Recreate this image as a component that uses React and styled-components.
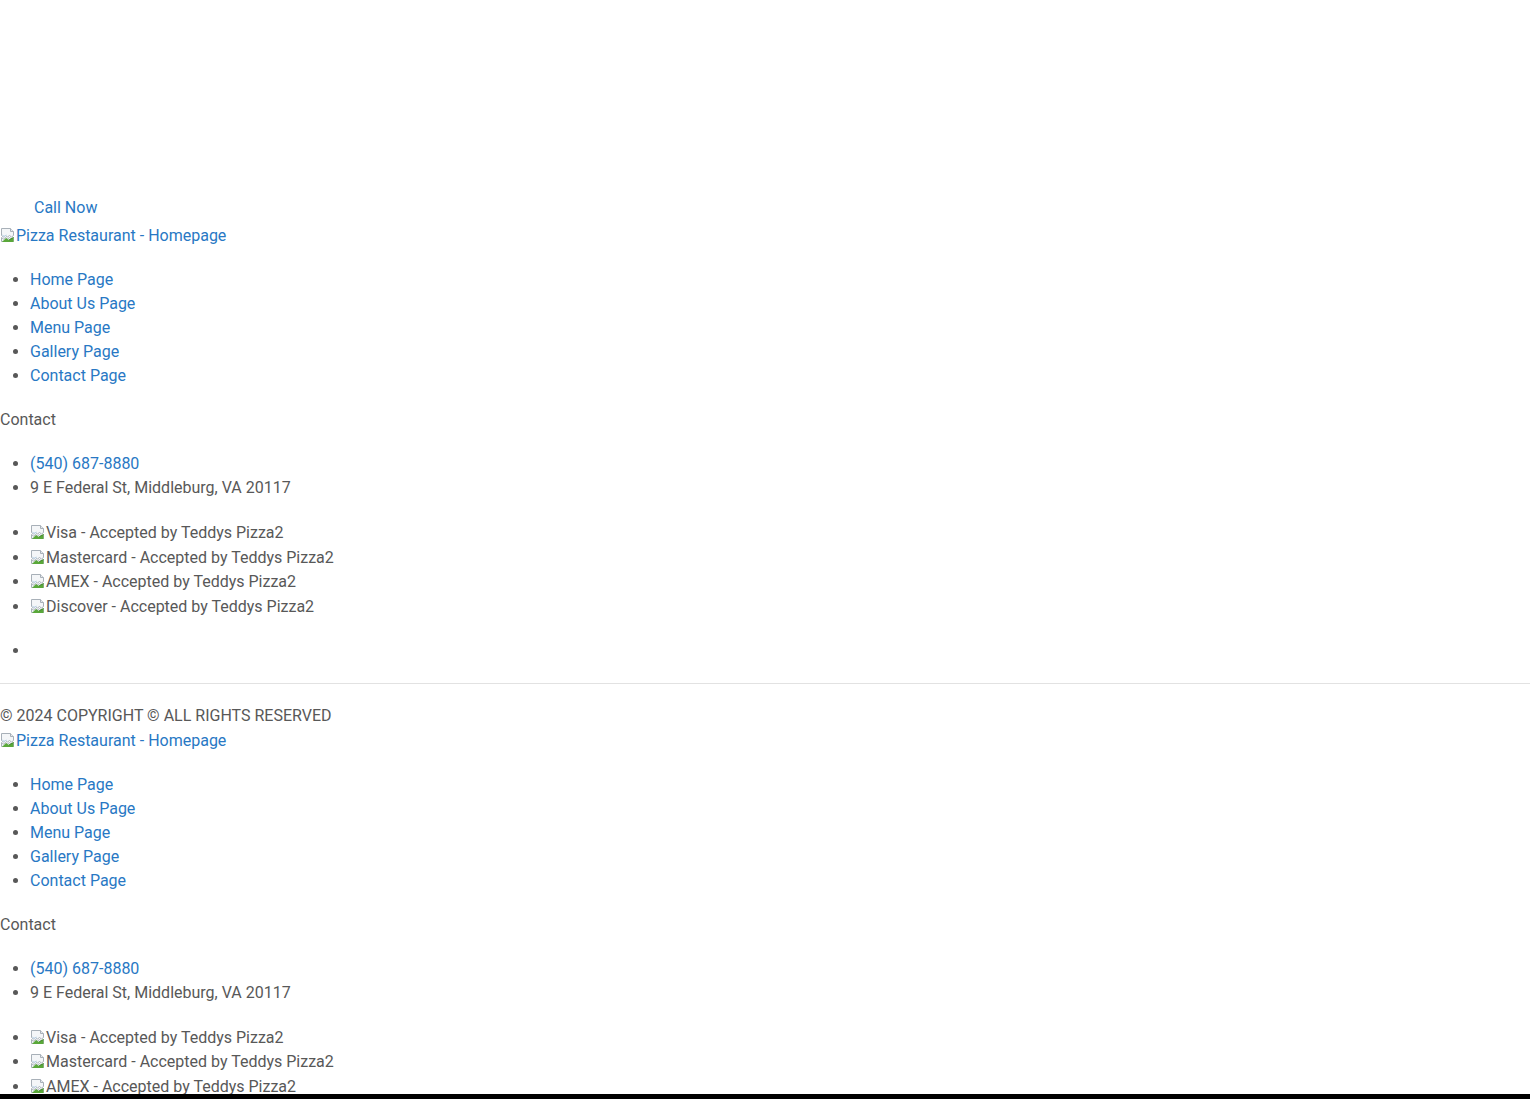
import React from "react";
import styled, { createGlobalStyle } from "styled-components";

const Global = createGlobalStyle`
  html, body { margin: 0; padding: 0; background: #fff; }
  body {
    font-family: Roboto, "Liberation Sans", Arial, sans-serif;
    font-size: 16px;
    line-height: 24px;
    color: #585858;
  }
  a { color: #2878c4; text-decoration: none; }
`;

const Page = styled.div`
  padding-top: 196px;
`;

const CallBar = styled.div`
  padding-left: 34px;
  height: 24px;
  margin-bottom: 4px;
`;

const LogoLink = styled.a`
  display: block;
  margin-top: 1px;
  height: 24px;
  white-space: nowrap;
`;

const List = styled.ul`
  margin: ${(p) => p.$margin || "20px 0"};
  padding-left: 30px;
  list-style: disc;
`;

const Item = styled.li`
  line-height: ${(p) => (p.$tall ? "24.67px" : "24px")};
  height: ${(p) => (p.$tall ? "24.67px" : "24px")};
`;

const Heading = styled.div`
  height: 24px;
`;

const Rule = styled.hr`
  margin: 20px 0 0;
  border: 0;
  border-top: 1px solid #e2e2e2;
  height: 0;
`;

const Copyright = styled.div`
  margin-top: 20px;
  height: 24px;
`;

const BottomBar = styled.div`
  position: fixed;
  left: 0;
  right: 0;
  bottom: 0;
  height: 5px;
  background: #000;
`;

const IconWrap = styled.svg`
  width: 16px;
  height: 16px;
  vertical-align: -2px;
`;

function BrokenImg() {
  return (
    <IconWrap viewBox="0 0 16 16">
      <path d="M1.5 1.5h9l3 3v4l-2 1.5-2-1.5-2 1.5-2-1.5-2 1.5-2-1.5z" fill="#f4f6f8" stroke="#a8b0b8" strokeWidth="1" />
      <path d="M10.5 1.5v3h3" fill="#e6eaee" stroke="#a8b0b8" strokeWidth="1" />
      <path d="M2.5 8l2 1.5 2-1.5" fill="none" stroke="#b8d6ee" strokeWidth="1" />
      <path d="M1.5 10.5l2 1.5 2-1.5 2 1.5 2-1.5 2 1.5 2-1.5v4h-12z" fill="#eef2f5" stroke="#a8b0b8" strokeWidth="1" />
      <path d="M2 15l4-4 3 2 4.5-2.5v4.5h-11.5z" fill="#5aa83a" />
      <path d="M9 13l4.5-2.5" stroke="#3f8a26" strokeWidth="1" fill="none" />
    </IconWrap>
  );
}

const nav = ["Home Page", "About Us Page", "Menu Page", "Gallery Page", "Contact Page"];
const cards = ["Visa", "Mastercard", "AMEX", "Discover"];

function FooterBlock() {
  return (
    <>
      <LogoLink href="#">
        <BrokenImg />
        Pizza Restaurant - Homepage
      </LogoLink>
      <List>
        {nav.map((n) => (
          <Item key={n}>
            <a href="#">{n}</a>
          </Item>
        ))}
      </List>
      <Heading>Contact</Heading>
      <List>
        <Item>
          <a href="#">(540) 687-8880</a>
        </Item>
        <Item>9 E Federal St, Middleburg, VA 20117</Item>
      </List>
      <List $margin="21px 0 0">
        {cards.map((c) => (
          <Item key={c} $tall>
            <BrokenImg />
            {c} - Accepted by Teddys Pizza2
          </Item>
        ))}
      </List>
      <List $margin="19px 0 20px">
        <Item />
      </List>
      <Rule />
      <Copyright>© 2024 COPYRIGHT © ALL RIGHTS RESERVED</Copyright>
    </>
  );
}

export default function App() {
  return (
    <>
      <Global />
      <Page>
        <CallBar>
          <a href="#">Call Now</a>
        </CallBar>
        <FooterBlock />
        <FooterBlock />
      </Page>
      <BottomBar />
    </>
  );
}
